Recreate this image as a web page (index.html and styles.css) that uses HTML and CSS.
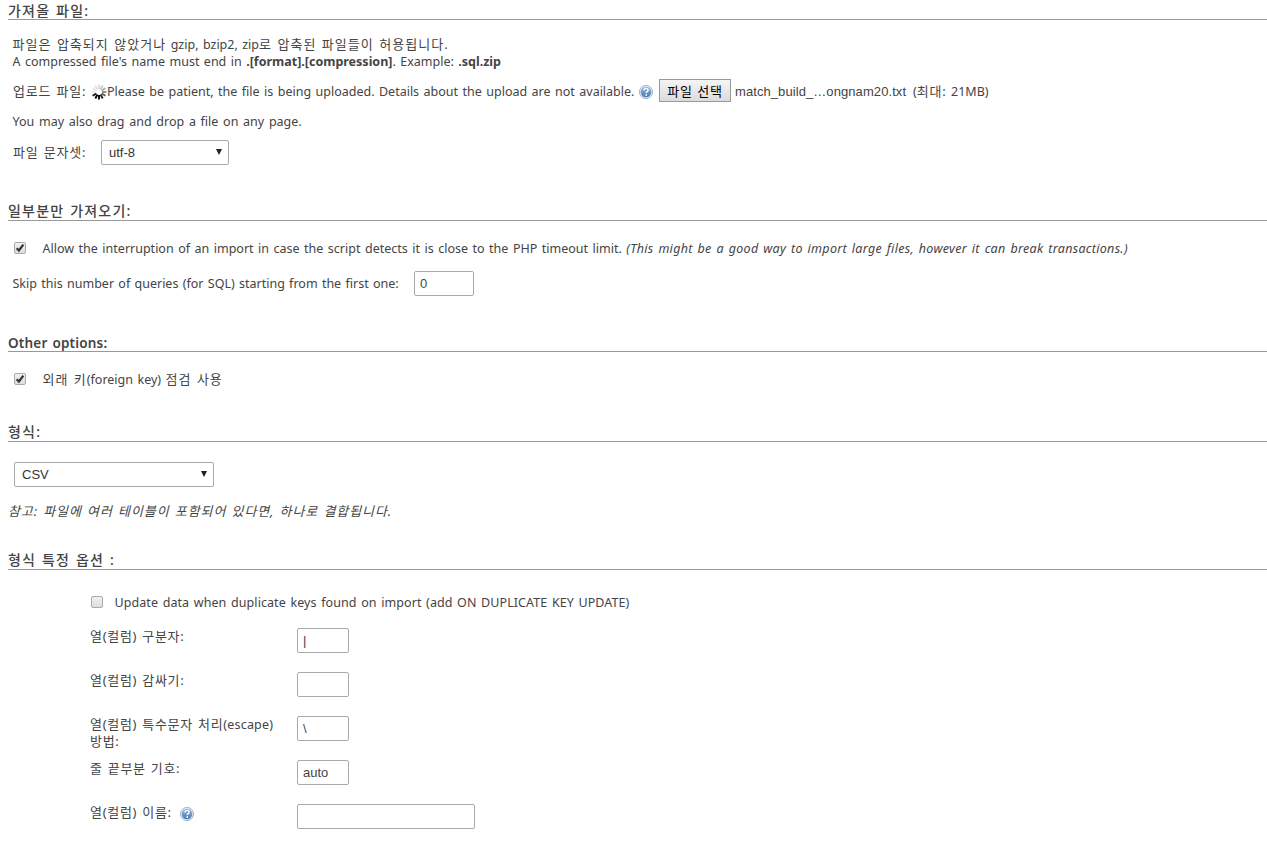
FILE: index.html
```
<!DOCTYPE html>
<html lang="ko">
<head>
    <meta charset="UTF-8">
    <meta name="viewport" content="width=device-width, initial-scale=1.0">
    <title>Import</title>
    <link rel="stylesheet" href="styles.css">
</head>
<body>
    <svg class="defs" width="0" height="0">
        <defs>
            <linearGradient id="help-bg" x1="0" y1="0" x2="0" y2="1">
                <stop offset="0" stop-color="#9bbbdf"/>
                <stop offset="1" stop-color="#4577b0"/>
            </linearGradient>
            <symbol id="help" viewBox="0 0 16 16">
                <circle cx="8" cy="8" r="6.6" fill="#dfe9f4" stroke="#8ba9cc" stroke-width="0.8"/>
                <circle cx="8" cy="8" r="5.3" fill="url(#help-bg)"/>
                <path d="M6 6.5c0-1.4 1-2.1 2.1-2.1s2 .7 2 1.8c0 1.5-1.9 1.4-1.9 2.8" fill="none" stroke="#fff" stroke-width="1.4"/>
                <circle cx="8.2" cy="11" r="0.9" fill="#fff"/>
            </symbol>
            <symbol id="check" viewBox="0 0 12 12">
                <path d="M2 6.2l2.7 2.8 5.3-7" fill="none" stroke="#333" stroke-width="2.7"/>
            </symbol>
        </defs>
    </svg>
    <form id="import-form">
        <section class="file">
            <h3 class="ko">가져올 파일:</h3>
            <p class="intro"><span class="ko">파일은 압축되지 않았거나</span> gzip, bzip2, zip<span class="ko">로 압축된 파일들이 허용됩니다.</span><br>
            A compressed file's name must end in <b>.[format].[compression]</b>. Example: <b>.sql.zip</b></p>
            <div class="upload">
                <label class="ko">업로드 파일:</label>
                <svg class="spinner" viewBox="0 0 16 16" stroke-width="1.9">
                    <path d="M8 .6v4.4" stroke="#ddd"/>
                    <path d="M11.7 1.6l-2.2 3.8" stroke="#ccc"/>
                    <path d="M14.4 4.3l-3.8 2.2" stroke="#aaa"/>
                    <path d="M15.4 8h-4.4" stroke="#888"/>
                    <path d="M14.4 11.7l-3.8-2.2" stroke="#555"/>
                    <path d="M11.7 14.4l-2.2-3.8" stroke="#222"/>
                    <path d="M8 15.4v-4.4" stroke="#000"/>
                    <path d="M4.3 14.4l2.2-3.8" stroke="#000"/>
                    <path d="M1.6 11.7l3.8-2.2" stroke="#111"/>
                    <path d="M.6 8h4.4" stroke="#eee"/>
                    <path d="M1.6 4.3l3.8 2.2" stroke="#e8e8e8"/>
                    <path d="M4.3 1.6l2.2 3.8" stroke="#e2e2e2"/>
                </svg>
                <span class="status">Please be patient, the file is being uploaded. Details about the upload are not available.</span>
                <svg class="help"><use href="#help"/></svg>
                <button type="button">파일 선택</button>
                <span class="filename">match_build_…ongnam20.txt</span>
                <span>(<span class="ko">최대:</span> 21MB)</span>
            </div>
            <p class="drag">You may also drag and drop a file on any page.</p>
            <div class="charset">
                <label class="ko">파일 문자셋:</label>
                <div class="select"><span>utf-8</span><i></i></div>
            </div>
        </section>

        <section class="partial">
            <h3 class="ko">일부분만 가져오기:</h3>
            <div class="check-row">
                <span class="checkbox"><svg><use href="#check"/></svg></span>
                <label>Allow the interruption of an import in case the script detects it is close to the PHP timeout limit. <em>(This might be a good way to import large files, however it can break transactions.)</em></label>
            </div>
            <div class="skip">
                <label>Skip this number of queries (for SQL) starting from the first one:</label>
                <input type="text" value="0">
            </div>
        </section>

        <section class="other">
            <h3>Other options:</h3>
            <div class="check-row">
                <span class="checkbox"><svg><use href="#check"/></svg></span>
                <label><span class="ko">외래 키</span>(foreign key) <span class="ko">점검 사용</span></label>
            </div>
        </section>

        <section class="format">
            <h3 class="ko">형식:</h3>
            <div class="select"><span>CSV</span><i></i></div>
            <p class="note ko">참고: 파일에 여러 테이블이 포함되어 있다면, 하나로 결합됩니다.</p>
        </section>

        <section class="options">
            <h3 class="ko">형식 특정 옵션 :</h3>
            <div class="check-row">
                <span class="checkbox"></span>
                <label>Update data when duplicate keys found on import (add ON DUPLICATE KEY UPDATE)</label>
            </div>
            <div class="field">
                <label class="ko">열(컬럼) 구분자:</label>
                <input type="text" value="|">
            </div>
            <div class="field">
                <label class="ko">열(컬럼) 감싸기:</label>
                <input type="text" value="">
            </div>
            <div class="field">
                <label class="ko">열(컬럼) 특수문자 처리<span class="en">(escape)</span><br>방법:</label>
                <input type="text" value="\">
            </div>
            <div class="field">
                <label class="ko">줄 끝부분 기호:</label>
                <input type="text" value="auto">
            </div>
            <div class="field">
                <label class="ko">열(컬럼) 이름: <svg class="help"><use href="#help"/></svg></label>
                <input type="text" class="wide" value="">
            </div>
        </section>
    </form>
</body>
</html>
```

FILE: styles.css
```
* {
    box-sizing: border-box;
}
body {
    margin: 0 0 0 8px;
    height: 842px;
    overflow: hidden;
    background: #fff;
    color: #444;
    font-family: "Noto Sans", "Noto Sans CJK KR", sans-serif;
    font-size: 12.5px;
    line-height: 17px;
    white-space: nowrap;
    word-spacing: 1.2px;
}
.defs {
    display: block;
}
.ko {
    font-size: 13px;
    letter-spacing: 0.8px;
    word-spacing: 1px;
}
h3 {
    height: 20px;
    margin: 0;
    padding-top: 3px;
    border-bottom: 1px solid #999;
    font-size: 13.5px;
    font-weight: 600;
    line-height: 17px;
    letter-spacing: 0.2px;
}
h3.ko {
    padding-top: 1px;
    font-size: 14px;
    font-weight: 500;
    letter-spacing: 1.2px;
}
p {
    margin: 0;
}
.file {
    height: 201px;
}
.file h3.ko {
    padding-top: 2px;
}
.partial {
    height: 131px;
}
.other {
    height: 90px;
}
.format {
    height: 128px;
}
.intro {
    padding: 16px 0 0 4.5px;
}
.intro .ko {
    letter-spacing: 1.03px;
}
.upload {
    display: flex;
    align-items: center;
    height: 24px;
    margin-top: 9px;
    padding-left: 5px;
}
.upload label {
    width: 78px;
}
.spinner {
    width: 16px;
    height: 16px;
    margin-top: 2px;
}
.status {
    width: 531px;
}
.help {
    width: 16px;
    height: 16px;
}
.upload .help {
    margin-top: 1px;
}
button {
    width: 72px;
    height: 23px;
    margin: -1px 4px 0 5px;
    padding: 0;
    border: 1px solid #999;
    background: linear-gradient(#f4f4f4, #dcdcdc);
    color: #000;
    font: 13px "Liberation Sans", "Noto Sans CJK KR", sans-serif;
    letter-spacing: 0.8px;
}
.filename {
    width: 178px;
    font: 13px "Liberation Sans", Arial, sans-serif;
    letter-spacing: 0.08px;
}
.drag {
    padding: 10px 0 0 4.5px;
    word-spacing: 1.45px;
}
.charset {
    display: flex;
    align-items: center;
    margin-top: 10px;
    padding-left: 5px;
}
.charset label {
    width: 88px;
    margin-top: -1px;
}
.select {
    display: flex;
    align-items: center;
    justify-content: space-between;
    width: 128px;
    height: 25px;
    padding: 0 6px 0 7px;
    border: 1px solid #aaa;
    border-radius: 2px;
    color: #333;
    font: 13px "Liberation Sans", Arial, sans-serif;
}
.select i {
    margin-top: -1px;
    border: 3.5px solid transparent;
    border-top: 6px solid #222;
    border-bottom: 0;
}
.check-row {
    display: flex;
    align-items: center;
    height: 17px;
    margin-top: 19px;
    padding-left: 6px;
    word-spacing: 1.25px;
}
.check-row em {
    letter-spacing: 0.31px;
}
.check-row .ko {
    letter-spacing: 1px;
}
.checkbox {
    display: flex;
    width: 12px;
    height: 12px;
    margin: -2px 16.5px 0 0;
    border: 1px solid #aaa;
    border-radius: 2px;
    background: linear-gradient(#f0f0f0, #dedede);
}
.checkbox svg {
    width: 10px;
    height: 10px;
}
input {
    width: 52px;
    height: 25px;
    padding: 0 5px;
    border: 1px solid #aaa;
    border-radius: 2px;
    background: #fff;
    color: #444;
    font: 13px "Liberation Sans", Arial, sans-serif;
}
.skip {
    display: flex;
    align-items: center;
    margin-top: 14px;
    padding-left: 4.5px;
    word-spacing: 1.05px;
}
.skip label {
    width: 401.5px;
}
.skip input {
    width: 60px;
}
.format .select {
    width: 200px;
    margin: 20px 0 0 6px;
}
.note {
    margin-top: 16px;
    font-style: italic;
    letter-spacing: 0.9px;
}
.options .check-row {
    margin-top: 24px;
    padding-left: 83px;
    letter-spacing: 0.08px;
}
.options .checkbox {
    margin-right: 11.5px;
}
.field {
    display: flex;
    height: 44px;
    padding-left: 82px;
    line-height: 16px;
}
.options .check-row + .field {
    margin-top: 17px;
}
.field label {
    width: 207px;
    letter-spacing: 0.7px;
}
.field .en {
    font-size: 12.5px;
    letter-spacing: 0.2px;
}
.field .help {
    margin-left: 2px;
    vertical-align: -5px;
}
.field input.wide {
    width: 178px;
}
```
